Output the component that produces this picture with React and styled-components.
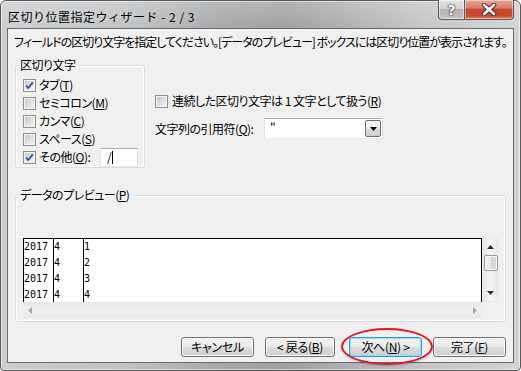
import React from 'react';
import styled, { createGlobalStyle } from 'styled-components';

const UI = `"Noto Sans CJK JP", "Noto Sans", sans-serif`;

const Global = createGlobalStyle`
  html, body { margin: 0; padding: 0; background: #ffffff; }
  body { width: 521px; height: 371px; overflow: hidden; font-family: ${UI}; }
`;

const Window = styled.div`
  box-sizing: border-box;
  width: 521px;
  height: 371px;
  border: 1px solid #595959;
  border-radius: 6px 6px 4px 4px;
  background:
    linear-gradient(180deg, rgba(255,255,255,0.2) 0px, rgba(255,255,255,0) 28px),
    linear-gradient(90deg, #cbcdd0 0%, #bfc1c3 25%, #a6a8aa 42%, #9ea0a2 55%, #b0b2b4 68%, #c4c6c8 82%, #d0d2d4 100%);
  box-shadow: inset 0 0 0 1px rgba(255,255,255,0.5);
  display: flex;
  flex-direction: column;
  padding: 0 6px 7px 6px;
`;

const TitleBar = styled.div`
  height: 27px;
  flex: none;
  display: flex;
  align-items: flex-start;
`;

const Title = styled.div`
  font: 12px/14px ${UI};
  color: #000;
  padding: 9px 0 0 1px;
  white-space: nowrap;
  letter-spacing: 0.5px;
  text-shadow: 0 0 6px rgba(255,255,255,0.6);
`;

const Captions = styled.div`
  margin: -1px 0 0 auto;
  display: flex;
  height: 20px;
`;

const CapBtn = styled.div`
  box-sizing: border-box;
  width: ${p => p.$w}px;
  height: 20px;
  border: 1px solid #5b5b5b;
  border-top: none;
  border-left: ${p => (p.$first ? '1px solid #5b5b5b' : 'none')};
  border-radius: ${p => (p.$first ? '0 0 0 4px' : '0 0 4px 0')};
  background: ${p =>
    p.$close
      ? 'linear-gradient(180deg, #e7a594 0%, #d9826b 40%, #c54a2e 50%, #c8472b 80%, #dd7a5a 100%)'
      : 'linear-gradient(180deg, #e2e3e4 0%, #d2d3d4 45%, #b3b4b6 50%, #bcbdbf 85%, #cfd0d2 100%)'};
  box-shadow: inset 0 0 0 1px rgba(255,255,255,0.45);
  display: flex;
  align-items: center;
  justify-content: center;
`;

const HelpGlyph = styled.span`
  font: bold 14px/14px "DejaVu Sans", sans-serif;
  color: #fff;
  text-shadow: 0 0 1px #333, 0 0 1px #333, 0 0 2px #444;
`;

const Client = styled.div`
  flex: 1;
  border: 1px solid #6c6c6c;
  background: #f0f0f0;
  display: flex;
  flex-direction: column;
  padding: 6px 7px 0 7px;
  font: 12px/14px ${UI};
  font-feature-settings: "palt";
  letter-spacing: -0.5px;
  color: #000;
`;

const Instruction = styled.div`
  margin-left: -1px;
  height: 14px;
  white-space: nowrap;
  letter-spacing: -1px;
`;

const TopRow = styled.div`
  margin-top: 9px;
  display: flex;
  align-items: flex-start;
`;

const Group = styled.fieldset`
  box-sizing: border-box;
  margin: 0;
  min-width: 0;
  width: ${p => p.$w}px;
  border: 1px solid #d5dfe5;
  border-radius: 3px;
  box-shadow: inset 0 0 0 1px #ffffff;
  padding: ${p => p.$pad};
`;

const Legend = styled.legend`
  padding: 0 2px;
  margin-left: -5px;
  font: 12px/14px ${UI};
  font-feature-settings: "palt";
  letter-spacing: -0.5px;
  white-space: nowrap;
`;

const CheckRow = styled.label`
  height: 18px;
  display: flex;
  align-items: center;
  gap: 3px;
  white-space: nowrap;
`;

const Box = styled.span`
  box-sizing: border-box;
  width: 13px;
  height: 13px;
  flex: none;
  border: 1px solid #8e8f8f;
  background: #f4f4f4;
  padding: 1px;
  display: flex;
`;

const BoxInner = styled.span`
  flex: 1;
  background: linear-gradient(135deg, #c4c8ce 0%, #dfe1e4 55%, #f3f3f3 100%);
  display: flex;
  align-items: center;
  justify-content: center;
`;

const U = styled.span`
  text-decoration: underline;
  text-underline-offset: 1px;
`;

const SmallBox = styled.span`
  box-sizing: border-box;
  width: 38px;
  height: 19px;
  margin-left: auto;
  background: #fff;
  border: 1px solid #abadb3;
  border-color: #abadb3 #dbdfe6 #e3e9ef #e2e3ea;
  display: flex;
  align-items: center;
  padding-left: 6px;
  font: 12px/14px ${UI};
`;

const Caret = styled.span`
  display: inline-block;
  width: 1px;
  height: 13px;
  background: #000;
  margin-left: 1px;
`;

const OptionCol = styled.div`
  margin-left: 10px;
  padding-top: 35px;
  display: flex;
  flex-direction: column;
`;

const ConsecRow = styled.label`
  height: 16px;
  display: flex;
  align-items: center;
  gap: 4px;
  white-space: nowrap;
`;

const QuoteRow = styled.div`
  margin-top: 9px;
  height: 21px;
  display: flex;
  align-items: center;
`;

const QuoteLabel = styled.span`
  width: 109px;
  flex: none;
  white-space: nowrap;
`;

const Combo = styled.div`
  box-sizing: border-box;
  width: 119px;
  height: 21px;
  background: #fff;
  border: 1px solid #abadb3;
  border-color: #abadb3 #dbdfe6 #e3e9ef #e2e3ea;
  display: flex;
  align-items: stretch;
  padding: 1px;
`;

const ComboText = styled.span`
  flex: 1;
  padding: 0 0 0 4px;
  font: 12px/14px ${UI};
`;

const DropBtn = styled.span`
  box-sizing: border-box;
  width: 16px;
  border: 1px solid #707070;
  border-radius: 2px;
  background: linear-gradient(180deg, #f2f2f2 0%, #ebebeb 50%, #dddddd 51%, #cfcfcf 100%);
  display: flex;
  align-items: center;
  justify-content: center;
`;

const PreviewGroup = styled(Group)`
  margin-top: 20px;
`;

const ScrollArea = styled.div`
  display: grid;
  grid-template-columns: 1fr 16px;
  grid-template-rows: 64px 16px;
`;

const List = styled.div`
  background: #fff;
  border-top: 1px solid #000;
  border-right: 1px solid #000;
  display: grid;
  grid-template-columns: 30px 30px 1fr;
  overflow: hidden;
`;

const Col = styled.div`
  border-left: 1px solid #000;
  font: 10px/16px "DejaVu Sans Mono", "Liberation Mono", monospace;
  letter-spacing: 0;
  color: #000;
  white-space: pre;
`;

const Cell = styled.div`
  height: 16px;
`;

const VScroll = styled.div`
  box-sizing: border-box;
  margin-left: 1px;
  background: linear-gradient(90deg, #e6e6e6, #f4f4f4 40%, #f4f4f4 60%, #e9e9e9);
  border: 1px solid #e8e8e8;
  display: flex;
  flex-direction: column;
  align-items: center;
`;

const ArrowCell = styled.span`
  height: ${p => p.$h}px;
  width: 100%;
  flex: none;
  display: flex;
  align-items: center;
  justify-content: center;
`;

const Thumb = styled.span`
  box-sizing: border-box;
  width: 14px;
  height: 16px;
  flex: none;
  border: 1px solid #979797;
  border-radius: 2px;
  background: linear-gradient(90deg, #f3f3f3 0%, #e8e8e8 50%, #d6d6d6 51%, #dcdcdc 100%);
  box-shadow: inset 0 0 0 1px #fbfbfb;
`;

const Track = styled.span`
  flex: 1;
`;

const HScroll = styled.div`
  background: linear-gradient(180deg, #e6e6e6, #efefef 40%, #efefef 60%, #e8e8e8);
  display: flex;
  align-items: center;
  justify-content: space-between;
  padding: 0 5px;
`;

const ButtonRow = styled.div`
  margin-top: 15px;
  display: flex;
  justify-content: flex-end;
  gap: 11px;
`;

const Btn = styled.button`
  position: relative;
  box-sizing: border-box;
  width: ${p => p.$w || 73}px;
  height: 20px;
  margin: 0 0 0 ${p => p.$ml || 0}px;
  padding: 0;
  font: 12px/14px ${UI};
  font-feature-settings: "palt";
  letter-spacing: -0.3px;
  color: #000;
  border: 1px solid ${p => (p.$default ? '#2f9fdc' : '#707070')};
  border-radius: 3px;
  background: linear-gradient(180deg, #f2f2f2 0%, #ebebeb 50%, #dddddd 51%, #cfcfcf 100%);
  box-shadow: inset 0 0 0 1px ${p => (p.$default ? '#8fdcf7' : '#fcfcfc')};
  white-space: nowrap;
`;

const Ellipse = styled.span`
  position: absolute;
  left: -9px;
  top: -10px;
  width: 88px;
  height: 33px;
  border: 2px solid #e3141c;
  border-radius: 50%;
  box-shadow: 0 1px 2px rgba(0,0,0,0.25);
  pointer-events: none;
`;

function Check({ checked }) {
  return (
    <Box>
      <BoxInner>
        {checked && (
          <svg width="9" height="9" viewBox="0 0 9 9">
            <path d="M1.2 4.6 L3.4 7 L7.8 1.4" fill="none" stroke="#2f4e9b" strokeWidth="1.7" />
          </svg>
        )}
      </BoxInner>
    </Box>
  );
}

function Tri({ dir, color = '#333', w = 7, h = 4 }) {
  const pts = {
    up: `0,${h} ${w},${h} ${w / 2},0`,
    down: `0,0 ${w},0 ${w / 2},${h}`,
    left: `${h},0 ${h},${w} 0,${w / 2}`,
    right: `0,0 0,${w} ${h},${w / 2}`,
  }[dir];
  const horiz = dir === 'left' || dir === 'right';
  return (
    <svg width={horiz ? h : w} height={horiz ? w : h} viewBox={`0 0 ${horiz ? h : w} ${horiz ? w : h}`}>
      <polygon points={pts} fill={color} />
    </svg>
  );
}

const rows = [
  ['2017', '4', '1'],
  ['2017', '4', '2'],
  ['2017', '4', '3'],
  ['2017', '4', '4'],
];

const separators = [
  { label: 'タブ', key: 'T', checked: true },
  { label: 'セミコロン', key: 'M', checked: false },
  { label: 'カンマ', key: 'C', checked: false },
  { label: 'スペース', key: 'S', checked: false },
];

export default function App() {
  return (
    <>
      <Global />
      <Window>
        <TitleBar>
          <Title>区切り位置指定ウィザード - 2 / 3</Title>
          <Captions>
            <CapBtn $w={27} $first>
              <HelpGlyph>?</HelpGlyph>
            </CapBtn>
            <CapBtn $w={49} $close>
              <svg width="16" height="13" viewBox="0 0 16 13">
                <path d="M3 2 L13 11 M13 2 L3 11" stroke="#4a2a22" strokeWidth="4.6" strokeLinecap="round" />
                <path d="M3 2 L13 11 M13 2 L3 11" stroke="#ffffff" strokeWidth="2.6" strokeLinecap="round" />
              </svg>
            </CapBtn>
          </Captions>
        </TitleBar>
        <Client>
          <Instruction>
            フィールドの区切り文字を指定してください。[データのプレビュー] ボックスには区切り位置が表示されます。
          </Instruction>
          <TopRow>
            <Group $w={130} $pad="4px 6px 1px 7px">
              <Legend>区切り文字</Legend>
              {separators.map(s => (
                <CheckRow key={s.key}>
                  <Check checked={s.checked} />
                  <span>
                    {s.label}(<U>{s.key}</U>)
                  </span>
                </CheckRow>
              ))}
              <CheckRow>
                <Check checked />
                <span>
                  その他(<U>O</U>):
                </span>
                <SmallBox>
                  /<Caret />
                </SmallBox>
              </CheckRow>
            </Group>
            <OptionCol>
              <ConsecRow>
                <Check />
                <span>
                  連続した区切り文字は 1 文字として扱う(<U>R</U>)
                </span>
              </ConsecRow>
              <QuoteRow>
                <QuoteLabel>
                  文字列の引用符(<U>Q</U>):
                </QuoteLabel>
                <Combo>
                  <ComboText>"</ComboText>
                  <DropBtn>
                    <Tri dir="down" color="#000" w={7} h={4} />
                  </DropBtn>
                </Combo>
              </QuoteRow>
            </OptionCol>
          </TopRow>
          <PreviewGroup $w={491} $pad="36px 7px 3px 7px">
            <Legend>
              データのプレビュー(<U>P</U>)
            </Legend>
            <ScrollArea>
              <List>
                {[0, 1, 2].map(c => (
                  <Col key={c}>
                    {rows.map((r, i) => (
                      <Cell key={i}>{r[c]}</Cell>
                    ))}
                  </Col>
                ))}
              </List>
              <VScroll>
                <ArrowCell $h={16}>
                  <Tri dir="up" color="#2b2b2b" w={7} h={4} />
                </ArrowCell>
                <Thumb />
                <Track />
                <ArrowCell $h={16}>
                  <Tri dir="down" color="#2b2b2b" w={7} h={4} />
                </ArrowCell>
              </VScroll>
              <HScroll>
                <Tri dir="left" color="#a6a6a6" w={7} h={4} />
                <Tri dir="right" color="#a6a6a6" w={7} h={4} />
              </HScroll>
            </ScrollArea>
          </PreviewGroup>
          <ButtonRow>
            <Btn>キャンセル</Btn>
            <Btn $w={70}>
              &lt; 戻る(<U>B</U>)
            </Btn>
            <Btn $default $ml={3}>
              次へ(<U>N</U>) &gt;
              <Ellipse />
            </Btn>
            <Btn>
              完了(<U>F</U>)
            </Btn>
          </ButtonRow>
        </Client>
      </Window>
    </>
  );
}
